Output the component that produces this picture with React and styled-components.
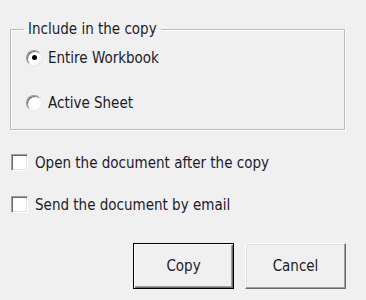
import React from "react";
import styled, { createGlobalStyle } from "styled-components";

const Global = createGlobalStyle`
  html, body { margin: 0; padding: 0; background: #f0f0f0; }
  body { font-family: "DejaVu Sans Condensed", "DejaVu Sans", "Liberation Sans", sans-serif; }
`;

const Dialog = styled.div`
  width: 366px;
  height: 300px;
  box-sizing: border-box;
  padding: 21px 0 0 10px;
  display: flex;
  flex-direction: column;
  color: #1b1b2a;
  font-size: 15px;
`;

const Group = styled.fieldset`
  margin: 0;
  width: 335px;
  height: 109px;
  box-sizing: border-box;
  border: 1px solid #bcbcbc;
  box-shadow: inset 1px 1px 0 #fff, 1px 1px 0 #fff;
  padding: 10px 0 0 15px;
  display: flex;
  flex-direction: column;
  gap: 24px;
`;

const Legend = styled.legend`
  margin-left: -2px;
  padding: 0 4px;
  line-height: 16px;
`;

const Row = styled.label`
  display: flex;
  align-items: center;
  gap: ${p => p.$gap}px;
  height: 21px;
  line-height: 16px;
`;

const Radio = styled.span`
  width: 14px;
  height: 14px;
  border-radius: 50%;
  border: 1px solid;
  border-color: #9a9a9a #e8e8e8 #e8e8e8 #9a9a9a;
  background: #fff;
  display: flex;
  align-items: center;
  justify-content: center;
  box-shadow: inset 1px 1px 0 #6a6a6a;
  flex: none;
  &::after {
    content: "";
    width: 5px;
    height: 5px;
    border-radius: 50%;
    background: ${p => (p.$checked ? "#000" : "transparent")};
  }
`;

const Checks = styled.div`
  display: flex;
  flex-direction: column;
  gap: 21px;
  margin-top: 22px;
  padding-left: 1px;
`;

const Box = styled.span`
  width: 15px;
  height: 15px;
  border: 1px solid;
  border-color: #a0a0a0 #fff #fff #a0a0a0;
  box-shadow: inset 1px 1px 0 #696969, inset -1px -1px 0 #e3e3e3;
  background: #fff;
  flex: none;
`;

const Buttons = styled.div`
  display: flex;
  gap: 11px;
  margin-top: 28px;
  padding-left: 123px;
`;

const Button = styled.button`
  width: 101px;
  height: 46px;
  box-sizing: border-box;
  font: inherit;
  color: inherit;
  background: #f0f0f0;
  padding: 0;
  border: 1px solid;
  border-color: ${p => (p.$default ? "#000" : "#fff #696969 #696969 #fff")};
  box-shadow: ${p =>
    p.$default
      ? "inset 1px 1px 0 #fff, inset -1px -1px 0 #696969, inset -2px -2px 0 #a0a0a0"
      : "inset -1px -1px 0 #a0a0a0, inset 1px 1px 0 #e3e3e3"};
`;

export default function App() {
  return (
    <>
      <Global />
      <Dialog>
        <Group>
          <Legend>Include in the copy</Legend>
          <Row $gap={6}>
            <Radio $checked />
            Entire Workbook
          </Row>
          <Row $gap={6}>
            <Radio />
            Active Sheet
          </Row>
        </Group>
        <Checks>
          <Row $gap={7}>
            <Box />
            Open the document after the copy
          </Row>
          <Row $gap={7}>
            <Box />
            Send the document by email
          </Row>
        </Checks>
        <Buttons>
          <Button $default>Copy</Button>
          <Button>Cancel</Button>
        </Buttons>
      </Dialog>
    </>
  );
}
